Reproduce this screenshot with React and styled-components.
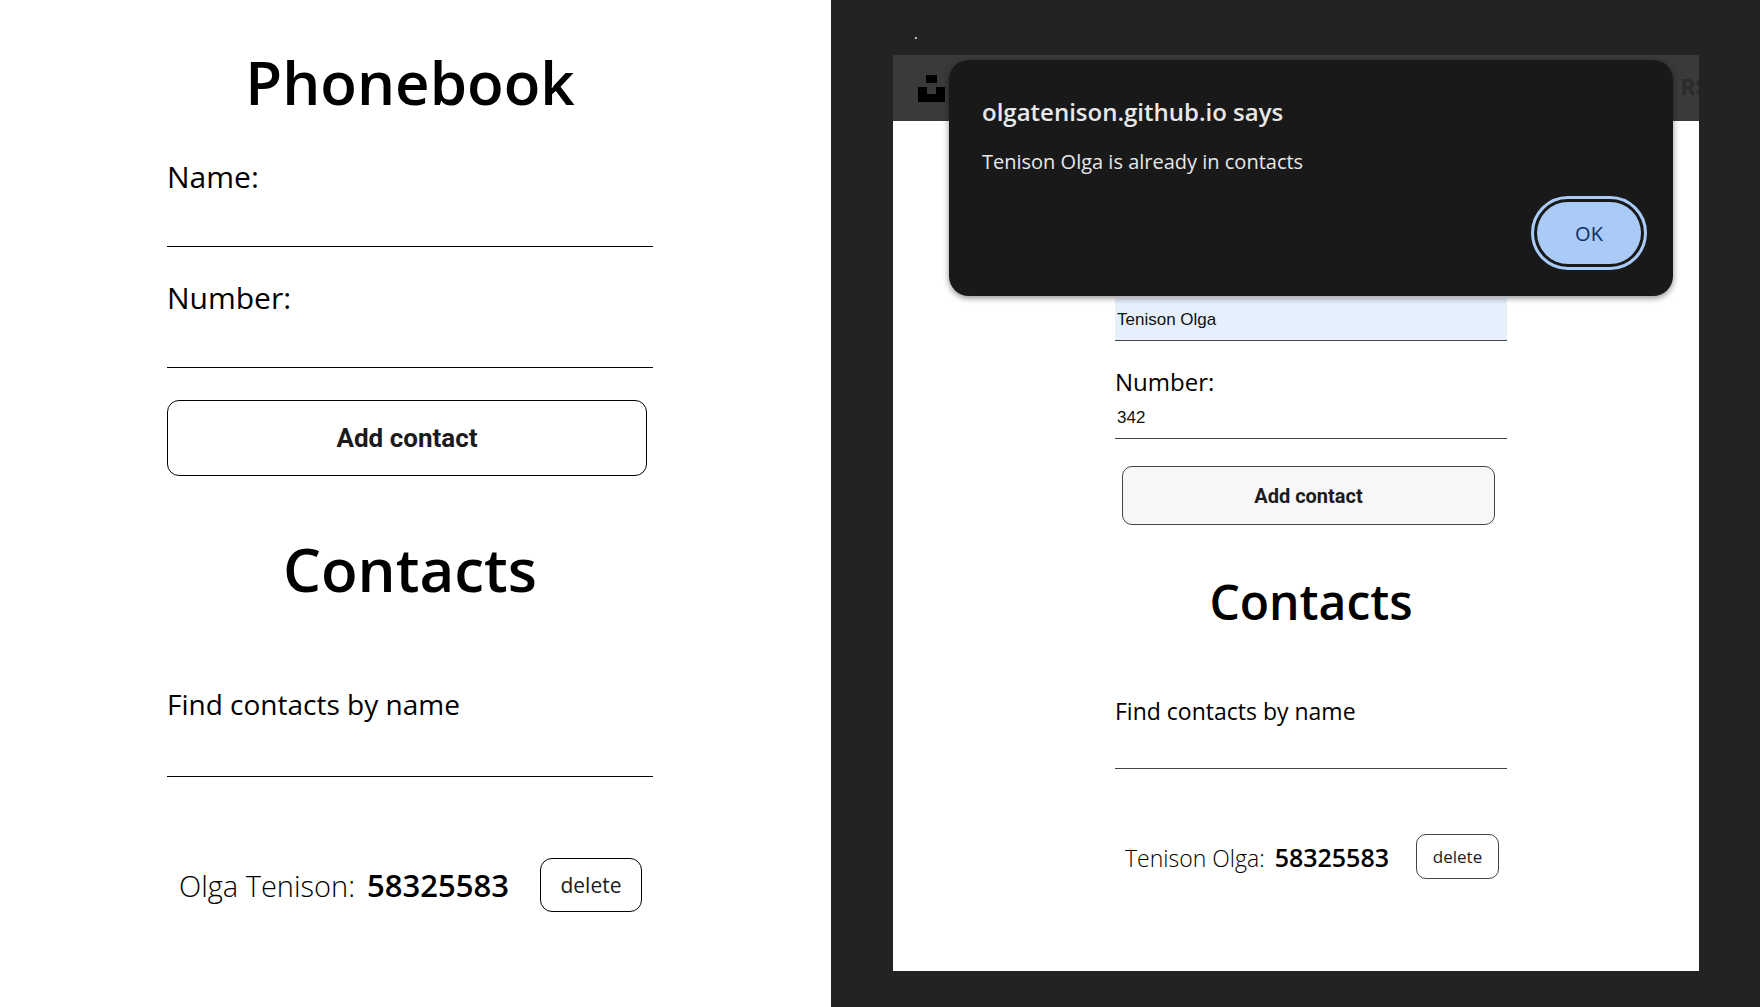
import React from "react";
import styled, { createGlobalStyle, ThemeProvider } from "styled-components";

const GlobalStyle = createGlobalStyle`
  *, *::before, *::after { box-sizing: border-box; }
  body {
    margin: 0;
    background: #fff;
    color: #000;
    font-family: "Open Sans", "Noto Sans", sans-serif;
  }
  h1, h2, p, ul { margin: 0; padding: 0; }
`;

const large = {
  title: 60, titleLine: 80, label: 30, labelLine: 38, find: 28,
  input: 51, findInput: 54, gap: 32, titleGap: 36, sectionGap: 53, findGap: 76, listGap: 81,
  inputText: 20, submitText: 26, submitHeight: 76, submitMargin: "0 6px 0 0", submitBg: "#fff", radius: 12,
  row: 29, phone: 31, rowGap: 12, rowHeight: 54, rowPadding: "0 11px 0 12px",
  deleteText: 21, deleteWidth: 102, line: "#000",
};

const small = {
  title: 48, titleLine: 64, label: 24, labelLine: 28, find: 23,
  input: 43, findInput: 44, gap: 27, titleGap: 28, sectionGap: 45, findGap: 63, listGap: 65,
  inputText: 17, submitText: 20, submitHeight: 59, submitMargin: "0 12px 0 7px", submitBg: "#f7f7f7", radius: 10,
  row: 23, phone: 25, rowGap: 10, rowHeight: 45, rowPadding: "0 8px 0 10px",
  deleteText: 17, deleteWidth: 83, line: "#444",
};

const Layout = styled.main`
  display: grid;
  grid-template-columns: 831fr 929fr;
  min-height: 100vh;
`;

const LightPane = styled.section`
  display: flex;
  justify-content: center;
  padding: 42px 11px 42px 0;
`;

const DarkPane = styled.section`
  background: #232323;
  padding: 0 61px 36px 62px;
`;

const Note = styled.p`
  height: 55px;
  padding: 22px 0 0 21px;
  color: #fff;
  font-size: 14px;
  line-height: 24px;
`;

const Page = styled.div`
  position: relative;
  background: #fff;
`;

const PageHeader = styled.header`
  display: flex;
  align-items: center;
  justify-content: space-between;
  height: 66px;
  padding-left: 25px;
  background: #3a3a3a;
`;

const HeaderLink = styled.a`
  width: 18px;
  overflow: hidden;
  color: #2c2c2c;
  font: 900 22px/32px Roboto, sans-serif;
  text-decoration: none;
`;

const PageBody = styled.div`
  display: flex;
  justify-content: center;
  padding: 177px 0 92px 30px;
`;

const Book = styled.div`
  width: 100%;
  max-width: ${(p) => p.$width}px;
`;

const Title = styled.h1`
  margin-bottom: ${(p) => p.theme.titleGap}px;
  font-size: ${(p) => p.theme.title}px;
  line-height: ${(p) => p.theme.titleLine}px;
  font-weight: 600;
  text-align: center;
`;

const Subtitle = styled(Title).attrs({ as: "h2" })`
  margin: ${(p) => p.theme.sectionGap}px 0 ${(p) => p.theme.findGap}px;
`;

const Form = styled.form`
  display: flex;
  flex-direction: column;
  gap: ${(p) => p.theme.gap}px;
`;

const Field = styled.div`
  display: flex;
  flex-direction: column;
`;

const Label = styled.label`
  font-size: ${(p) => (p.$find ? p.theme.find : p.theme.label)}px;
  line-height: ${(p) => p.theme.labelLine}px;
`;

const Input = styled.input`
  width: 100%;
  height: ${(p) => (p.$find ? p.theme.findInput : p.theme.input)}px;
  padding: 2px 2px 0;
  border: 0;
  border-bottom: 1px solid ${(p) => p.theme.line};
  border-radius: 0;
  outline: 0;
  background: ${(p) => (p.$filled ? "#e6f0fc" : "transparent")};
  color: #111;
  font: ${(p) => p.theme.inputText}px "Liberation Sans", Arial, sans-serif;
`;

const OutlineButton = styled.button`
  padding: 0;
  border: 1px solid ${(p) => p.theme.line};
  border-radius: ${(p) => p.theme.radius}px;
  background: #fff;
  color: #1b1b1b;
`;

const SubmitButton = styled(OutlineButton)`
  height: ${(p) => p.theme.submitHeight}px;
  margin: ${(p) => p.theme.submitMargin};
  background: ${(p) => p.theme.submitBg};
  font: 700 ${(p) => p.theme.submitText}px Roboto, sans-serif;
`;

const DeleteButton = styled(OutlineButton)`
  width: ${(p) => p.theme.deleteWidth}px;
  height: 100%;
  font: 400 ${(p) => p.theme.deleteText}px "Open Sans", sans-serif;
`;

const List = styled.ul`
  margin-top: ${(p) => p.theme.listGap}px;
  list-style: none;
`;

const Row = styled.li`
  display: flex;
  align-items: center;
  justify-content: space-between;
  height: ${(p) => p.theme.rowHeight}px;
  padding: ${(p) => p.theme.rowPadding};
  white-space: nowrap;
`;

const Entry = styled.div`
  display: flex;
  align-items: baseline;
  gap: ${(p) => p.theme.rowGap}px;
`;

const Name = styled.span`
  font-size: ${(p) => p.theme.row}px;
  font-weight: 300;
`;

const Phone = styled.span`
  font-size: ${(p) => p.theme.phone}px;
  font-weight: 600;
`;

const Dialog = styled.div`
  position: absolute;
  top: 5px;
  left: 56px;
  right: 26px;
  display: flex;
  flex-direction: column;
  padding: 36px 32px 32px 33px;
  border-radius: 20px;
  background: #191919;
  box-shadow: 0 2px 6px rgba(0, 0, 0, 0.45);
  color: #e8e8e8;
`;

const DialogTitle = styled.h2`
  margin-bottom: 20px;
  font-size: 24px;
  line-height: 32px;
  font-weight: 600;
`;

const DialogText = styled.p`
  margin-bottom: 26px;
  font-size: 20px;
  line-height: 28px;
`;

const DialogButton = styled.button`
  align-self: flex-end;
  width: 104px;
  height: 62px;
  padding: 0;
  border: 0;
  border-radius: 31px;
  outline: 3px solid #aacaf7;
  outline-offset: 3px;
  background: #aacaf7;
  color: #0b2f63;
  font: 500 20px "Open Sans", sans-serif;
`;

function Logo() {
  return (
    <svg width="27" height="27" viewBox="0 0 27 27" aria-hidden="true">
      <path d="M8 0h11v8H8zM0 12h9v7h9v-7h9v15H0z" />
    </svg>
  );
}

function Search({ id }) {
  return (
    <Field>
      <Label $find htmlFor={id}>Find contacts by name</Label>
      <Input $find id={id} type="text" />
    </Field>
  );
}

function Contacts({ name, phone }) {
  return (
    <List>
      <Row>
        <Entry>
          <Name>{name}:</Name>
          <Phone>{phone}</Phone>
        </Entry>
        <DeleteButton type="button">delete</DeleteButton>
      </Row>
    </List>
  );
}

export default function App() {
  return (
    <>
      <GlobalStyle />
      <Layout>
        <ThemeProvider theme={large}>
          <LightPane>
            <Book $width={486}>
              <Title>Phonebook</Title>
              <Form>
                <Field>
                  <Label htmlFor="name">Name:</Label>
                  <Input id="name" type="text" />
                </Field>
                <Field>
                  <Label htmlFor="number">Number:</Label>
                  <Input id="number" type="tel" />
                </Field>
                <SubmitButton type="button">Add contact</SubmitButton>
              </Form>
              <Subtitle>Contacts</Subtitle>
              <Search id="find" />
              <Contacts name="Olga Tenison" phone="58325583" />
            </Book>
          </LightPane>
        </ThemeProvider>

        <ThemeProvider theme={small}>
          <DarkPane>
            <Note>.</Note>
            <Page>
              <PageHeader>
                <Logo />
                <HeaderLink href="#rs">RS</HeaderLink>
              </PageHeader>
              <PageBody>
                <Book $width={392}>
                  <Form>
                    <Field>
                      <Input $filled type="text" aria-label="Name" defaultValue="Tenison Olga" />
                    </Field>
                    <Field>
                      <Label htmlFor="page-number">Number:</Label>
                      <Input id="page-number" type="tel" defaultValue="342" />
                    </Field>
                    <SubmitButton type="button">Add contact</SubmitButton>
                  </Form>
                  <Subtitle>Contacts</Subtitle>
                  <Search id="page-find" />
                  <Contacts name="Tenison Olga" phone="58325583" />
                </Book>
              </PageBody>
              <Dialog role="alertdialog" aria-labelledby="alert-title" aria-describedby="alert-text">
                <DialogTitle id="alert-title">olgatenison.github.io says</DialogTitle>
                <DialogText id="alert-text">Tenison Olga is already in contacts</DialogText>
                <DialogButton type="button">OK</DialogButton>
              </Dialog>
            </Page>
          </DarkPane>
        </ThemeProvider>
      </Layout>
    </>
  );
}
